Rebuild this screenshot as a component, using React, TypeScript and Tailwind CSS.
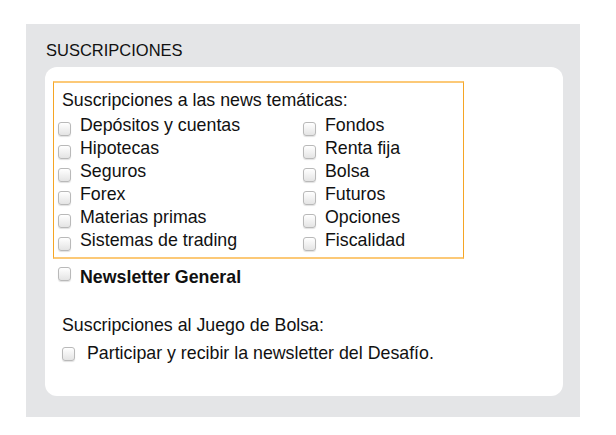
import React from "react";

const Box = ({ className = "" }: { className?: string }) => (
  <span
    className={
      "block shrink-0 w-[13px] h-[14px] rounded-[3px] border border-[#b9b9b9] bg-gradient-to-b from-white to-[#e4e4e4] shadow-[0_1px_1px_rgba(0,0,0,0.12)] " +
      className
    }
  />
);

const left = ["Depósitos y cuentas", "Hipotecas", "Seguros", "Forex", "Materias primas", "Sistemas de trading"];
const right = ["Fondos", "Renta fija", "Bolsa", "Futuros", "Opciones", "Fiscalidad"];

export default function App() {
  return (
    <div className="w-[616px] h-[435px] bg-white pt-[24px] pl-[26px] text-[#111] font-['Liberation_Sans',Arial,sans-serif]">
      <div className="w-[554px] h-[393px] bg-[#e4e5e7] pt-[16px] pl-[19px] pr-[17px]">
        <div className="pl-[1px] text-[16.5px] leading-[20px] h-[20px]">SUSCRIPCIONES</div>
        <div className="mt-[7px] bg-white rounded-[12px] h-[329px] pt-[14px] pl-[8px]">
          <div className="w-[411px] border-y-2 border-y-[#fcc977] border-x border-x-[#f5a524] pt-[6px] pb-[5px] pl-[4px] text-[17.8px] leading-[23px]">
            <div className="ml-[4px] mb-[2px]">Suscripciones a las news temáticas:</div>
            <div className="grid grid-cols-[245px_1fr]">
              {left.map((l, i) => (
                <React.Fragment key={l}>
                  <div className="flex items-start h-[23px]">
                    <Box className="mt-[8px]" />
                    <span className="ml-[9px]">{l}</span>
                  </div>
                  <div className="flex items-start h-[23px]">
                    <Box className="mt-[8px]" />
                    <span className="ml-[9px]">{right[i]}</span>
                  </div>
                </React.Fragment>
              ))}
            </div>
          </div>
          <div className="mt-[7px] ml-[5px] flex items-start h-[23px] text-[17.8px] leading-[23px] font-bold">
            <Box className="mt-[1px]" />
            <span className="ml-[9px]">Newsletter General</span>
          </div>
          <div className="mt-[25px] ml-[9px] h-[23px] text-[17.8px] leading-[23px]">Suscripciones al Juego de Bolsa:</div>
          <div className="mt-[5px] ml-[9px] flex items-start h-[23px] text-[17.8px] leading-[23px]">
            <Box className="mt-[5px]" />
            <span className="ml-[12px]">Participar y recibir la newsletter del Desafío.</span>
          </div>
        </div>
      </div>
    </div>
  );
}
